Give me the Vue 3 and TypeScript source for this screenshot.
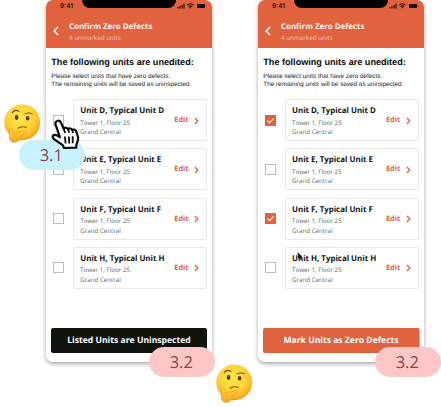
<script setup lang="ts">
interface Phone {
  id: string
  action: string
  tone: string
  selected: string[]
}

const units: string[] = ['D', 'E', 'F', 'H']
const phones: Phone[] = [
  { id: 'left', action: 'Listed Units are Uninspected', tone: 'dark', selected: [] },
  { id: 'right', action: 'Mark Units as Zero Defects', tone: 'orange', selected: ['D', 'F'] },
]
const thinkers: string[] = ['one', 'two']
</script>

<template>
  <main class="board">
    <section v-for="p in phones" :key="p.id" class="phone" :class="p.id">
      <header class="top">
        <div class="status">
          <span class="time">9:41</span>
          <span class="notch"></span>
          <svg class="signals" viewBox="0 0 30 6" width="30" height="6">
            <path d="M.3 3.9h1.2v1.5H.3zM2.4 3h1.2v2.4H2.4zM4.5 1.9h1.2v3.5H4.5zM6.4.7h1.2v4.7H6.4z" fill="#25130e" />
            <path d="M10.3 2.1Q13.4-.5 16.5 2.1M11.6 3.6Q13.4 2.1 15.2 3.6" fill="none" stroke="#25130e" stroke-width="1.1" />
            <path d="M12.4 4.5q1-.8 2 0l-1 1.1z" fill="#25130e" />
            <rect x="20" y=".9" width="8" height="4.2" rx="1" fill="#180b07" />
            <path d="M28.9 2.2v1.6" stroke="#7c3321" stroke-width=".7" />
          </svg>
        </div>
        <div class="titlebar">
          <svg class="back" viewBox="0 0 6 10" width="6" height="10">
            <path d="M5 1 1.2 5 5 9" fill="none" stroke="#fff" stroke-width="1.5" />
          </svg>
          <div>
            <h1>Confirm Zero Defects</h1>
            <p class="count">4 unmarked units</p>
          </div>
        </div>
      </header>
      <div class="intro">
        <h2>The following units are unedited:</h2>
        <p>Please select units that have zero defects.</p>
        <p>The remaining units will be saved as uninspected.</p>
      </div>
      <ul class="list">
        <li v-for="u in units" :key="u">
          <span class="check" :class="{ on: p.selected.includes(u) }">
            <svg v-if="p.selected.includes(u)" viewBox="0 0 11 11" width="11" height="11">
              <path d="M2.5 5.6 4.6 7.6 8.7 3.3" fill="none" stroke="#fff" stroke-width="1.1" />
            </svg>
          </span>
          <article class="card">
            <div class="info">
              <h3>Unit {{ u }}, Typical Unit {{ u }}</h3>
              <p class="floor">Tower 1, Floor 25</p>
              <p class="place">Grand Central</p>
            </div>
            <span class="edit">Edit</span>
            <svg class="next" viewBox="0 0 5 8" width="5" height="8">
              <path d="M1 1 3.8 4 1 7" fill="none" stroke="#e0623e" stroke-width="1.3" />
            </svg>
          </article>
        </li>
      </ul>
      <div class="action" :class="p.tone"><span>{{ p.action }}</span></div>
    </section>

    <span class="tag blue">3.1</span>
    <span class="tag pink first">3.2</span>
    <span class="tag pink second">3.2</span>

    <svg v-for="t in thinkers" :key="t" class="thinker" :class="t" viewBox="0 0 37 39" width="37" height="39">
      <defs>
        <radialGradient :id="'face-' + t" cx=".46" cy=".38" r=".62">
          <stop offset="0" stop-color="#ffe74a" />
          <stop offset=".6" stop-color="#ffd336" />
          <stop offset=".88" stop-color="#fbb322" />
          <stop offset="1" stop-color="#ee9620" />
        </radialGradient>
        <linearGradient :id="'hand-' + t" x1="0" y1="0" x2="0" y2="1">
          <stop offset="0" stop-color="#ffd53c" />
          <stop offset="1" stop-color="#f5a51d" />
        </linearGradient>
      </defs>
      <circle cx="18.2" cy="18.3" r="17.9" :fill="'url(#face-' + t + ')'" />
      <path d="M8.2 8.6Q11 5 15 7.4" fill="none" stroke="#764014" stroke-width="1.1" stroke-linecap="round" />
      <path d="M21 9.7Q24.6 7.9 28.4 9.6" fill="none" stroke="#764014" stroke-width="1" stroke-linecap="round" />
      <ellipse cx="12.6" cy="13.3" rx="1.8" ry="2.6" fill="#5c3115" />
      <ellipse cx="23.6" cy="14.2" rx="1.8" ry="2.3" fill="#5c3115" />
      <circle cx="12.8" cy="12.3" r=".5" fill="#b88649" />
      <circle cx="23.9" cy="13.2" r=".5" fill="#b88649" />
      <path d="M14 24.2Q18.4 21.9 22.2 23.4" fill="none" stroke="#8a4b14" stroke-width="1.1" stroke-linecap="round" />
      <path d="M7.4 24.2C5.6 23.8 5 25.7 5.3 28L5.5 34.5C5.9 37.9 8.9 38.6 11.6 38.2 14.8 37.7 16.3 35.2 16.4 32.2L21.8 28.7C23.5 27.2 22.6 25.6 20.6 26.2L12.6 28.3 9.2 29.4C8.8 27.5 9.2 24.7 7.4 24.2Z" :fill="'url(#hand-' + t + ')'" stroke="#e9951a" stroke-width=".6" />
    </svg>

    <svg class="hand" viewBox="0 0 29 31" width="29" height="31">
      <path d="M6.1 2C8.2 1.2 9.5 2.3 10.2 4.1L12.7 9.7C14.1 8.1 16.2 8.6 17 10.2 18.4 8.9 20.5 9.4 21.2 11 23 9.9 24.7 10.8 25.3 12.7L27 18C27.7 21 26.3 23.2 25.4 25.4L25.3 28.6 13.1 29 11.7 26.1 4.4 21.2C1.9 19.4 1 17.7 2.1 16.6 3.7 15 6.4 16.4 8.9 18.2L4.8 6.4C4 4.3 4.5 2.7 6.1 2Z" fill="#fff" stroke="#0a0a0a" stroke-width="2.2" stroke-linejoin="round" />
      <path d="M12.7 9.7 14.2 14M17 10.2 18.2 13.8M21.2 11 22 14M13.9 17.5l.7 7M17.8 17.5l.5 7M21.7 17.3v7" fill="none" stroke="#0a0a0a" stroke-width="1.8" />
    </svg>
    <svg class="pointer" viewBox="0 0 6 8" width="6" height="8">
      <path d="M.7.3 5.3 4.6 3.7 4.8 4.9 7.2 3.7 7.7 2.5 5.3 1 6.4Z" fill="#111" />
    </svg>
  </main>
</template>

<style>
body { background: #fff; }
</style>

<style scoped>
.board {
  position: relative;
  display: flex;
  gap: 46px;
  width: 441px;
  height: 407px;
  padding-left: 46px;
  box-sizing: border-box;
  overflow: hidden;
  font-family: "Open Sans", "Noto Sans", sans-serif;
  text-rendering: geometricPrecision;
}
h1, h2, h3, p, ul { margin: 0; padding: 0; list-style: none; }
h1, h2, h3, p, span { white-space: nowrap; }
.phone {
  flex: none;
  width: 166px;
  height: 362px;
  box-sizing: border-box;
  border-radius: 7px;
  background: #fff;
  box-shadow: 0 2px 4px rgba(0, 0, 0, .35);
}
.top { height: 48px; border-radius: 7px 7px 0 0; background: #e0623e; }
.status { display: grid; grid-template-columns: 36px 94px 36px; height: 20px; }
.time { padding-left: 14px; font: 600 6.4px/12px Inter, sans-serif; color: #28130d; }
.notch { height: 8px; border-radius: 0 0 9px 9px; background: #000; }
.signals { margin: 3px 0 0 1px; }
.titlebar { display: flex; padding-left: 7px; gap: 10px; }
.back { margin-top: 6px; }
h1 { padding-top: 1px; font-size: 7.9px; line-height: 13px; font-weight: 700; color: #fff3ed; }
.count { font-size: 6.3px; line-height: 8px; color: #f6c4b3; }
.intro { padding: 8px 0 0 5.3px; height: 51px; box-sizing: border-box; font-family: "Liberation Sans", sans-serif; color: #222; }
h2 { font-size: 9.1px; line-height: 13px; color: #080808; margin-bottom: 4px; }
.intro p { font-size: 6.35px; line-height: 8px; }
.list { display: grid; gap: 7.3px; padding-left: 7px; }
.list li { display: flex; align-items: center; gap: 9.3px; height: 42px; }
.right .list li { gap: 9px; }
.check { width: 11px; height: 11px; box-sizing: border-box; border: 1px solid #bdbdbd; }
.check.on { border: 0; background: #e0623e; }
.check svg { display: block; }
.card { display: flex; width: 133.5px; height: 42px; box-sizing: border-box; border: 1px solid #e8e8e8; border-radius: 2px; }
.info { width: 94px; padding: 5px 0 0 6px; }
h3 { font-size: 7.9px; line-height: 12.6px; font-weight: 700; color: #111; }
.floor, .place { font-size: 6.2px; line-height: 9.6px; color: #666; }
.edit { width: 19px; font-size: 7.3px; line-height: 40px; font-weight: 700; color: #e0623e; }
.next { margin: 16.5px 0 0 1px; }
.action { width: 156px; height: 25px; margin: 39px 0 0 5px; border-radius: 2px; color: #fff; text-align: center; font-size: 8.6px; line-height: 25px; font-weight: 700; }
.dark { background: #11130f; }
.orange { background: #e0623e; box-shadow: 1px 0 1px #aaa; }
.tag { position: absolute; width: 66px; height: 30px; padding-right: 1.5px; box-sizing: border-box; border-radius: 15px; text-align: center; font: 16.5px/30px "Open Sans", sans-serif; color: #894349; }
.blue { left: 19px; top: 140px; background: #c8f1ff; }
.pink { top: 347px; background: #ffc7c7; }
.first { left: 149px; }
.second { left: 375px; }
.thinker, .hand, .pointer { position: absolute; }
.one { left: 4px; top: 104px; }
.two { left: 216px; top: 364px; }
.hand { left: 51px; top: 119px; }
.pointer { left: 297px; top: 252px; }
</style>
